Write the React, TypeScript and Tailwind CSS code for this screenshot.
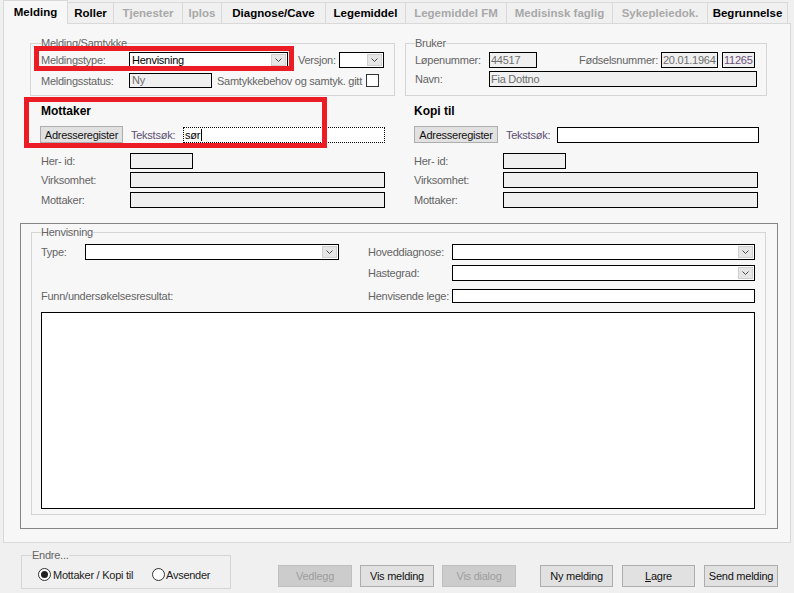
import React from "react";

type Tab = { label: string; w: string; enabled: boolean; active?: boolean };

const tabs: Tab[] = [
  { label: "Melding", w: "w-[65px]", enabled: true, active: true },
  { label: "Roller", w: "w-[46px]", enabled: true },
  { label: "Tjenester", w: "w-[69px]", enabled: false },
  { label: "Iplos", w: "w-[39px]", enabled: false },
  { label: "Diagnose/Cave", w: "w-[104px]", enabled: true },
  { label: "Legemiddel", w: "w-[80px]", enabled: true },
  { label: "Legemiddel FM", w: "w-[101px]", enabled: false },
  { label: "Medisinsk faglig", w: "w-[106px]", enabled: false },
  { label: "Sykepleiedok.", w: "w-[95px]", enabled: false },
  { label: "Begrunnelse", w: "w-[80px]", enabled: true },
];

function Chevron() {
  return (
    <svg width="7" height="4" viewBox="0 0 7 4">
      <path d="M0.5 0.5 L3.5 3.5 L6.5 0.5" stroke="#4a4a4a" strokeWidth="1" fill="none" />
    </svg>
  );
}

function Combo({ className, text }: { className: string; text?: string }) {
  return (
    <div className={`flex h-[16px] shrink-0 border border-black bg-white ${className}`}>
      <span className="flex-1 pl-[2px] leading-[14px] text-black">{text}</span>
      <span className="m-px flex w-[15px] items-center justify-center border border-[#d0d0d0] bg-[#e6e6e6]">
        <Chevron />
      </span>
    </div>
  );
}

function Field({ className, text, tone }: { className: string; text?: string; tone?: string }) {
  return (
    <div
      className={`h-[16px] shrink-0 border border-black bg-[#f0f0f0] pl-[1px] leading-[14px] ${tone ?? "text-[#6d6d6d]"} ${className}`}
    >
      {text}
    </div>
  );
}

function WinButton({
  children,
  className,
  disabled,
}: {
  children: React.ReactNode;
  className: string;
  disabled?: boolean;
}) {
  return (
    <button
      type="button"
      className={`flex shrink-0 items-center justify-center border ${
        disabled
          ? "border-[#bfbfbf] bg-[#cccccc] text-[#9d9d9d]"
          : "border-[#adadad] bg-[#e1e1e1] text-[#111]"
      } ${className}`}
    >
      {children}
    </button>
  );
}

function Radio({ checked }: { checked?: boolean }) {
  return (
    <span className="flex h-[13px] w-[13px] shrink-0 items-center justify-center rounded-full border border-[#333] bg-white">
      {checked && <span className="h-[7px] w-[7px] rounded-full bg-[#222]" />}
    </span>
  );
}

function AddressColumn({ title, wide }: { title: string; wide?: boolean }) {
  return (
    <div className="w-[373px]">
      <div className="ml-[1px] h-[14px] text-[12px] font-bold leading-[14px] tracking-normal text-black">
        {title}
      </div>
      <div className="mt-[8px] flex h-[17px] items-center">
        <WinButton className={`h-[17px] ${wide ? "w-[83px]" : "ml-[1px] w-[84px]"}`}>
          Adresseregister
        </WinButton>
        <span className={`ml-[8px] text-[#5d4f73] ${wide ? "w-[52px]" : "w-[51px]"}`}>Tekstsøk:</span>
        {wide ? (
          <div className="flex h-[16px] w-[202px] items-center border border-dotted border-black bg-white pl-[1px] text-black">
            <span>sør</span>
            <span className="ml-px h-[12px] w-px bg-black" />
          </div>
        ) : (
          <div className="h-[16px] w-[202px] border border-black bg-white" />
        )}
      </div>
      <div className="mt-[10px] flex h-[16px] items-center">
        <span className="ml-[1px] w-[89px]">Her- id:</span>
        <Field className="w-[63px]" />
      </div>
      <div className="mt-[3px] flex h-[16px] items-center">
        <span className="ml-[1px] w-[89px]">Virksomhet:</span>
        <Field className="w-[255px]" />
      </div>
      <div className="mt-[4px] flex h-[16px] items-center">
        <span className="ml-[1px] w-[89px]">Mottaker:</span>
        <Field className="w-[255px]" />
      </div>
    </div>
  );
}

export default function App() {
  return (
    <div className="relative h-[593px] w-[794px] overflow-hidden bg-[#f0f0f0] font-['Liberation_Sans',Arial,sans-serif] text-[11px] leading-[14px] tracking-[-0.25px] text-[#646464]">
      {/* tab strip */}
      <div className="flex h-[23px] items-end pl-[3px]">
        {tabs.map((t) =>
          t.active ? (
            <div
              key={t.label}
              className={`relative z-10 mb-[-1px] flex h-[24px] items-center justify-center border border-b-0 border-[#d9d9d9] bg-[#f7f7f7] pb-[2px] text-[11.5px] font-bold tracking-normal text-black ${t.w}`}
            >
              {t.label}
            </div>
          ) : (
            <div
              key={t.label}
              className={`flex h-[21px] items-center justify-center border-t border-r border-[#d9d9d9] bg-[#f0f0f0] text-[11.5px] font-bold tracking-normal ${
                t.enabled ? "text-black" : "text-[#a8a8a8]"
              } ${t.w}`}
            >
              {t.label}
            </div>
          )
        )}
      </div>

      {/* tab page */}
      <div className="ml-[3px] h-[520px] w-[788px] border border-[#d9d9d9] bg-[#f7f7f7]">
        <div className="ml-[26px] mt-[12px] flex">
          <fieldset className="h-[60px] w-[363px] border border-[#d5d5d5] px-[10px]">
            <legend className="leading-[14px]">Melding/Samtykke</legend>
            <div className="mt-[2px] flex h-[16px] items-center">
              <span className="w-[88px]">Meldingstype:</span>
              <Combo className="w-[159px]" text="Henvisning" />
              <span className="ml-[10px] w-[41px]">Versjon:</span>
              <Combo className="w-[45px]" />
            </div>
            <div className="mt-[5px] flex h-[15px] items-center">
              <span className="w-[88px]">Meldingsstatus:</span>
              <div className="h-[15px] w-[83px] border border-black bg-[#f0f0f0] pl-[2px] leading-[13px] text-[#6d6d6d]">
                Ny
              </div>
              <span className="ml-[5px]">Samtykkebehov og samtyk. gitt</span>
              <span className="ml-[4px] h-[13px] w-[13px] border border-[#333] bg-white" />
            </div>
          </fieldset>

          <fieldset className="ml-[10px] h-[60px] w-[362px] border border-[#d5d5d5] px-[9px]">
            <legend className="leading-[14px]">Bruker</legend>
            <div className="mt-[2px] flex h-[16px] items-center">
              <span className="w-[74px]">Løpenummer:</span>
              <Field className="w-[48px]" text="44517" />
              <span className="ml-[42px] w-[82px]">Fødselsnummer:</span>
              <Field className="w-[57px]" text="20.01.1964" />
              <Field className="ml-[4px] w-[33px]" text="11265" tone="text-[#6a4f7a]" />
            </div>
            <div className="mt-[3px] flex h-[16px] items-center">
              <span className="w-[74px]">Navn:</span>
              <Field className="w-[268px]" text="Fia Dottno" />
            </div>
          </fieldset>
        </div>

        <div className="ml-[36px] mt-[8px] flex">
          <AddressColumn title="Mottaker" wide />
          <AddressColumn title="Kopi til" />
        </div>

        <div className="ml-[16px] mt-[15px] h-[306px] w-[758px] border border-[#858585]">
          <fieldset className="ml-[10px] mt-[1px] h-[290px] w-[735px] border border-[#d5d5d5] px-[9px]">
            <legend className="leading-[14px]">Henvisning</legend>
            <div className="mt-[5px] flex h-[16px] items-center">
              <div className="flex w-[327px] items-center">
                <span className="w-[44px]">Type:</span>
                <Combo className="w-[254px]" />
              </div>
              <span className="w-[84px]">Hoveddiagnose:</span>
              <Combo className="w-[303px]" />
            </div>
            <div className="mt-[5px] flex h-[16px] items-center">
              <div className="w-[327px]" />
              <span className="w-[84px]">Hastegrad:</span>
              <Combo className="w-[303px]" />
            </div>
            <div className="mt-[8px] flex h-[14px] items-center">
              <span className="w-[327px]">Funn/undersøkelsesresultat:</span>
              <span className="w-[84px]">Henvisende lege:</span>
              <div className="h-[14px] w-[303px] border border-black bg-white" />
            </div>
            <div className="mt-[9px] h-[197px] w-[714px] border border-black bg-white" />
          </fieldset>
        </div>
      </div>

      {/* bottom bar */}
      <div className="flex items-start">
        <fieldset className="ml-[21px] mt-[6px] h-[40px] w-[210px] border border-[#d5d5d5] px-[10px]">
          <legend className="leading-[13px]">Endre...</legend>
          <div className="ml-[6px] mt-[6px] flex h-[13px] items-center text-[#222]">
            <div className="flex w-[114px] items-center">
              <Radio checked />
              <span className="ml-[2px]">Mottaker / Kopi til</span>
            </div>
            <Radio />
            <span className="ml-[1px]">Avsender</span>
          </div>
        </fieldset>
        <div className="ml-[47px] mt-[22px] flex">
          <WinButton className="h-[22px] w-[74px]" disabled>
            Vedlegg
          </WinButton>
          <WinButton className="ml-[8px] h-[22px] w-[74px]">Vis melding</WinButton>
          <WinButton className="ml-[8px] h-[22px] w-[74px]" disabled>
            Vis dialog
          </WinButton>
          <WinButton className="ml-[24px] h-[22px] w-[73px]">Ny melding</WinButton>
          <WinButton className="ml-[9px] h-[22px] w-[73px]">
            <span className="underline">L</span>agre
          </WinButton>
          <WinButton className="ml-[9px] h-[22px] w-[74px]">Send melding</WinButton>
        </div>
      </div>

      {/* red highlight marks */}
      <div className="pointer-events-none absolute left-[34px] top-[46px] h-[25px] w-[260px] border-[5px] border-[#ec1c24]" />
      <div className="pointer-events-none absolute left-[24px] top-[97px] h-[51px] w-[303px] border-[5px] border-[#ec1c24]" />
    </div>
  );
}
